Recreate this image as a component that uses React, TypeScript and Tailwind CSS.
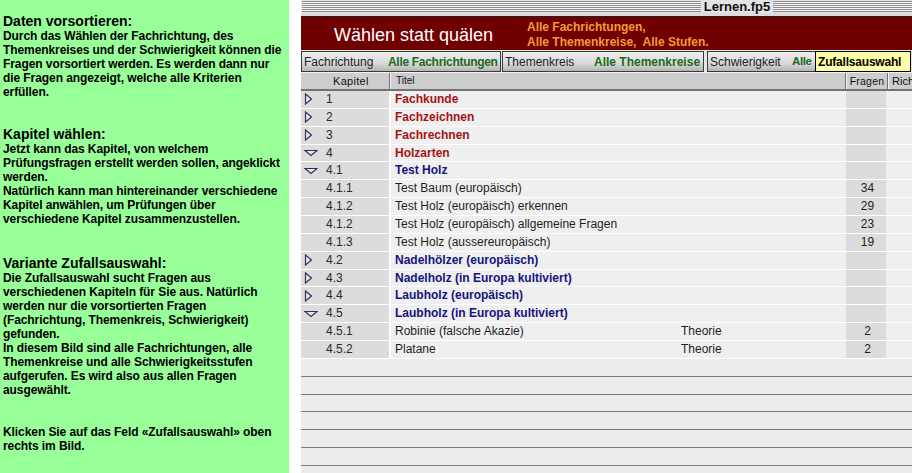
import React from "react";

type Row = { nr: string; title: string; kind: "red" | "blue" | "plain"; icon?: "right" | "down"; typ?: string; count?: string };

const rows: Row[] = [
  { nr: "1", title: "Fachkunde", kind: "red", icon: "right" },
  { nr: "2", title: "Fachzeichnen", kind: "red", icon: "right" },
  { nr: "3", title: "Fachrechnen", kind: "red", icon: "right" },
  { nr: "4", title: "Holzarten", kind: "red", icon: "down" },
  { nr: "4.1", title: "Test Holz", kind: "blue", icon: "down" },
  { nr: "4.1.1", title: "Test Baum (europäisch)", kind: "plain", count: "34" },
  { nr: "4.1.2", title: "Test Holz (europäisch) erkennen", kind: "plain", count: "29" },
  { nr: "4.1.2", title: "Test Holz (europäisch) allgemeine Fragen", kind: "plain", count: "23" },
  { nr: "4.1.3", title: "Test Holz (aussereuropäisch)", kind: "plain", count: "19" },
  { nr: "4.2", title: "Nadelhölzer (europäisch)", kind: "blue", icon: "right" },
  { nr: "4.3", title: "Nadelholz (in Europa kultiviert)", kind: "blue", icon: "right" },
  { nr: "4.4", title: "Laubholz (europäisch)", kind: "blue", icon: "right" },
  { nr: "4.5", title: "Laubholz (in Europa kultiviert)", kind: "blue", icon: "down" },
  { nr: "4.5.1", title: "Robinie (falsche Akazie)", kind: "plain", typ: "Theorie", count: "2" },
  { nr: "4.5.2", title: "Platane", kind: "plain", typ: "Theorie", count: "2" },
];

function Arrow({ dir }: { dir?: "right" | "down" }) {
  if (dir === "right")
    return (
      <svg width="9" height="12" viewBox="0 0 9 12">
        <path d="M1.5 1 L7.5 6 L1.5 11 Z" fill="#e6e8f0" stroke="#2c3458" strokeWidth="1.2" />
      </svg>
    );
  if (dir === "down")
    return (
      <svg width="14" height="8" viewBox="0 0 14 8">
        <path d="M1 1.5 H13 L7 6.5 Z" fill="#e6e8f0" stroke="#2c3458" strokeWidth="1.2" />
      </svg>
    );
  return null;
}

function Line({ children, head }: { children: React.ReactNode; head?: boolean }) {
  return head ? (
    <div className="h-[15px] leading-[15px] text-[14px] font-bold whitespace-nowrap">{children}</div>
  ) : (
    <div className="h-[14px] leading-[14px] text-[12px] font-bold tracking-[-0.08px] whitespace-nowrap">{children}</div>
  );
}

export default function App() {
  return (
    <div className="w-[912px] h-[473px] flex bg-white overflow-hidden font-['Liberation_Sans',Arial,sans-serif] text-black">
      {/* help text */}
      <div className="w-[289px] h-full bg-[#99ff99] pl-[3px] pt-[14px]">
        <Line head>Daten vorsortieren:</Line>
        <Line>Durch das Wählen der Fachrichtung, des</Line>
        <Line>Themenkreises und der Schwierigkeit können die</Line>
        <Line>Fragen vorsortiert werden. Es werden dann nur</Line>
        <Line>die Fragen angezeigt, welche alle Kriterien</Line>
        <Line>erfüllen.</Line>
        <div className="h-[28px]" />
        <Line head>Kapitel wählen:</Line>
        <Line>Jetzt kann das Kapitel, von welchem</Line>
        <Line>Prüfungsfragen erstellt werden sollen, angeklickt</Line>
        <Line>werden.</Line>
        <Line>Natürlich kann man hintereinander verschiedene</Line>
        <Line>Kapitel anwählen, um Prüfungen über</Line>
        <Line>verschiedene Kapitel zusammenzustellen.</Line>
        <div className="h-[30px]" />
        <Line head>Variante Zufallsauswahl:</Line>
        <Line>Die Zufallsauswahl sucht Fragen aus</Line>
        <Line>verschiedenen Kapiteln für Sie aus. Natürlich</Line>
        <Line>werden nur die vorsortierten Fragen</Line>
        <Line>(Fachrichtung, Themenkreis, Schwierigkeit)</Line>
        <Line>gefunden.</Line>
        <Line>In diesem Bild sind alle Fachrichtungen, alle</Line>
        <Line>Themenkreise und alle Schwierigkeitsstufen</Line>
        <Line>aufgerufen. Es wird also aus allen Fragen</Line>
        <Line>ausgewählt.</Line>
        <div className="h-[28px]" />
        <Line>Klicken Sie auf das Feld «Zufallsauswahl» oben</Line>
        <Line>rechts im Bild.</Line>
      </div>

      <div className="w-[12px] h-full bg-white" />

      {/* window */}
      <div className="w-[611px] h-full overflow-hidden">
        <div className="w-[872px] h-full relative bg-[#ececec]">
          <div className="h-[13px] bg-[#e4e4e4] pt-[1px] px-[1px]">
            <div className="h-[11px] flex items-center bg-[repeating-linear-gradient(to_bottom,#8c8c8c_0px,#8c8c8c_1px,#f6f6f6_1px,#f6f6f6_2px)]">
              <div className="mx-auto px-[3px] bg-[#e4e4e4] text-[13px] leading-[11px] font-bold text-[#111]">Lernen.fp5</div>
            </div>
          </div>
          <div className="h-[4px] bg-[#dcdcdc] border-b border-[#222]" />
          <div className="h-[33px] bg-[#700000] flex items-center pt-[3px]">
            <div className="w-[226px] pl-[33px] text-[18px] text-white">Wählen statt quälen</div>
            <div className="text-[12px] leading-[15px] font-bold text-[#f39a36]">
              <div>Alle Fachrichtungen,</div>
              <div>Alle Themenkreise,&nbsp; Alle Stufen.</div>
            </div>
          </div>
          <div className="h-[1px] bg-[#dff3df]" />
          <div className="h-[21px] flex gap-[1px] bg-[#e6e6e6] text-[12px] whitespace-nowrap">
            <div className="w-[200px] flex items-center overflow-hidden border border-[#3a3a3a] bg-[linear-gradient(#efefef,#d8d8d8_60%,#b4b4b4)]">
              <span className="w-[86px] shrink-0 pl-[2px] text-[#222]">Fachrichtung</span>
              <span className="font-bold tracking-[-0.3px] text-[#1c6a1c]">Alle Fachrichtungen</span>
            </div>
            <div className="w-[202px] flex items-center overflow-hidden border border-[#3a3a3a] bg-[linear-gradient(#efefef,#d8d8d8_60%,#b4b4b4)]">
              <span className="w-[91px] shrink-0 pl-[2px] text-[#222]">Themenkreis</span>
              <span className="font-bold text-[#1c6a1c]">Alle Themenkreise</span>
            </div>
            <div className="w-[108px] ml-[2px] flex items-center overflow-hidden border border-r-0 border-[#3a3a3a] bg-[linear-gradient(#efefef,#d8d8d8_60%,#b4b4b4)]">
              <span className="w-[84px] shrink-0 pl-[2px] text-[#222]">Schwierigkeit</span>
              <span className="font-bold text-[11.5px] tracking-[-0.4px] text-[#1c6a1c]">Alle</span>
            </div>
            <div className="w-[96px] -ml-[1px] flex items-center pl-[2px] border border-black bg-[#ffffa6] font-bold tracking-[-0.2px]">
              Zufallsauswahl
            </div>
          </div>
          <div className="h-[1px] bg-[#f2f2f2]" />
          {/* header */}
          <div className="h-[16px] flex bg-[#cdcdcd] text-[11px] text-[#111] leading-[16px] whitespace-nowrap">
            <div className="w-[88px] pl-[32px] tracking-[0.3px]">Kapitel</div>
            <div className="w-[2px] bg-[linear-gradient(to_right,#6e6e6e_50%,#fafafa_50%)]" />
            <div className="w-[454px] pl-[5px] text-[10px]">Titel</div>
            <div className="w-[2px] bg-[linear-gradient(to_right,#6e6e6e_50%,#fafafa_50%)]" />
            <div className="w-[40px] text-center text-[10.5px] tracking-[0.2px]">Fragen</div>
            <div className="w-[2px] bg-[linear-gradient(to_right,#6e6e6e_50%,#fafafa_50%)]" />
            <div className="flex-1 pl-[3px]">Richtig</div>
          </div>
          <div className="h-[2px] bg-[#727272]" />
          {/* rows */}
          {rows.map((r, i) => (
            <div key={i} className="h-[17.86px] flex border-b border-white text-[12px] leading-[17px]">
              <div className="w-[88px] flex items-center bg-[#dcdcdc] text-[#2a2a2a]">
                <div className="w-[25px] flex items-center pl-[3px]">
                  <Arrow dir={r.icon} />
                </div>
                <span>{r.nr}</span>
              </div>
              <div className="w-[2px] bg-white" />
              <div className="w-[454px] flex bg-[#efefef] pl-[4px]">
                <span
                  className={
                    r.kind === "red"
                      ? "w-[286px] font-bold text-[#a51414]"
                      : r.kind === "blue"
                        ? "w-[286px] font-bold text-[#14147e]"
                        : "w-[286px] text-[#1e1e1e]"
                  }
                >
                  {r.title}
                </span>
                {r.typ && <span className="text-[#1e1e1e]">{r.typ}</span>}
              </div>
              <div className="w-[1px] bg-[#efefef]" />
              <div className="w-[40px] bg-[#dcdcdc] text-center pl-[3px] text-[#1e1e1e]">{r.count}</div>
              <div className="flex-1 bg-[#efefef]" />
            </div>
          ))}
          {[0, 1, 2, 3, 4, 5].map((i) => (
            <div key={i} className="h-[17.86px] border-b border-[#7a7a7a]" />
          ))}
        </div>
      </div>
    </div>
  );
}
